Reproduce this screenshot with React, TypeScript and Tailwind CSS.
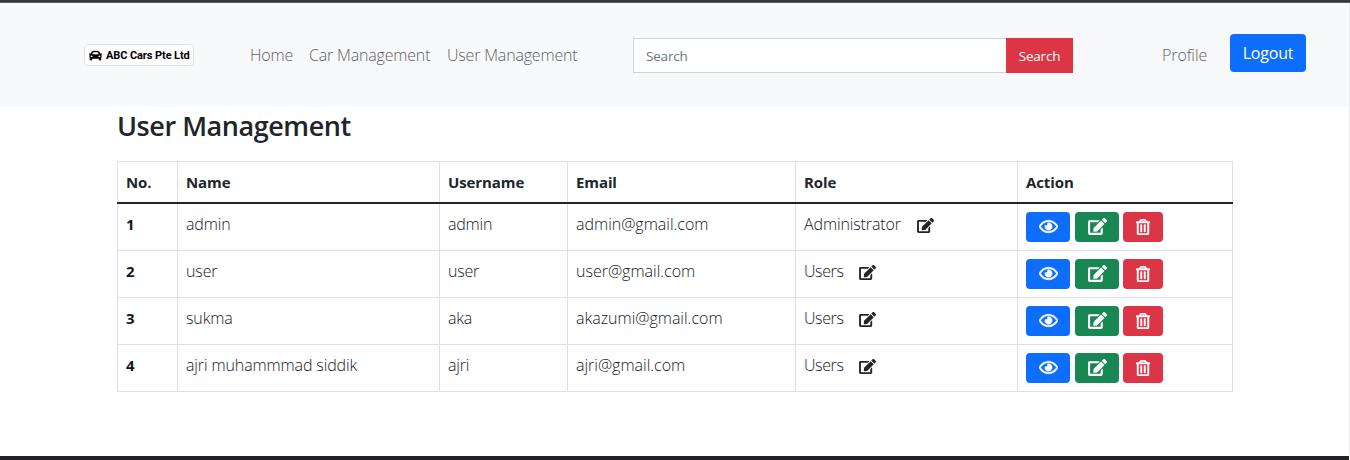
import { FaCar, FaEdit, FaRegEye, FaRegTrashAlt } from 'react-icons/fa';

const users = [
  { name: 'admin', username: 'admin', email: 'admin@gmail.com', role: 'Administrator' },
  { name: 'user', username: 'user', email: 'user@gmail.com', role: 'Users' },
  { name: 'sukma', username: 'aka', email: 'akazumi@gmail.com', role: 'Users' },
  { name: 'ajri muhammmad siddik', username: 'ajri', email: 'ajri@gmail.com', role: 'Users' },
];

const columns = [
  { label: 'No.', width: 'w-[60px]' },
  { label: 'Name', width: 'w-[262px]' },
  { label: 'Username', width: 'w-[128px]' },
  { label: 'Email', width: 'w-[228px]' },
  { label: 'Role', width: 'w-[222px]' },
  { label: 'Action', width: 'w-[215px]' },
];

function Navbar() {
  return (
    <nav className="flex h-[104px] items-start bg-[#f8f9fb] pl-[84px] text-base leading-6 text-[#5f6063]">
      <div className="mt-[41px] flex h-[22px] w-[110px] shrink-0 items-center rounded border border-[#dee2e6] bg-white pl-1 text-black">
        <FaCar className="h-[13px] w-[13px] shrink-0" />
        <span className="ml-[4px] whitespace-nowrap font-['Roboto',sans-serif] text-[11px] font-bold leading-none tracking-[-0.1px]">
          ABC Cars Pte Ltd
        </span>
      </div>
      <div className="ml-14 mt-[40px] flex h-6 w-[383px] shrink-0 whitespace-nowrap font-light tracking-[-0.18px]">
        <a className="w-[59px]">Home</a>
        <a className="w-[138px]">Car Management</a>
        <a>User Management</a>
      </div>
      <form className="mt-[35px] flex h-[35px] w-[440px] shrink-0 text-sm">
        <input
          className="w-[373px] border border-r-0 border-[#ced4da] bg-white px-3 pt-0.5 text-[13.5px] tracking-[-0.2px] placeholder:text-[#6c757d] placeholder:opacity-100"
          placeholder="Search"
        />
        <button type="button" className="w-[67px] bg-[#dc3545] pt-0.5 text-[13.5px] tracking-[-0.2px] text-white">
          Search
        </button>
      </form>
      <a className="ml-[89px] mt-[40px] w-[68px] font-light tracking-[-0.1px]">Profile</a>
      <button type="button" className="mt-[31px] h-[38px] w-[76px] rounded bg-[#0d6efd] text-base tracking-[-0.2px] text-white">
        Logout
      </button>
    </nav>
  );
}

export default function App() {
  return (
    <div className="flex h-[460px] w-full flex-col overflow-hidden bg-white font-['Open_Sans','Noto_Sans',sans-serif] text-[#212529]">
      <div className="h-[3px] shrink-0 border-b border-[#5c5c5e] bg-[#363639]" />
      <div className="h-[453px] border-r border-[#ececee]">
        <Navbar />
        <main className="pl-[117px]">
          <h1 className="h-[54px] pt-0.5 text-[27px] font-semibold leading-[34px] tracking-[-0.45px]">User Management</h1>
          <table className="w-[1116px] table-fixed border-collapse text-left text-base leading-6">
            <thead>
              <tr className="h-[41px] border-b-2 border-[#212529]">
                {columns.map((c) => (
                  <th key={c.label} className={`${c.width} border-x border-t border-[#dee2e6] px-2 text-[15px] font-bold tracking-[-0.1px]`}>
                    {c.label}
                  </th>
                ))}
              </tr>
            </thead>
            <tbody className="font-light text-[#15181b]">
              {users.map((u, i) => (
                <tr key={u.email} className="h-[47px] align-top">
                  <th className="border-x border-b border-[#dee2e6] p-2 text-[15px] font-bold">{i + 1}</th>
                  <td className="border-x border-b border-[#dee2e6] p-2 tracking-[-0.12px]">{u.name}</td>
                  <td className="border-x border-b border-[#dee2e6] p-2 tracking-[-0.2px]">{u.username}</td>
                  <td className="border-x border-b border-[#dee2e6] p-2">{u.email}</td>
                  <td className="border-x border-b border-[#dee2e6] p-2">
                    <div className="flex h-6 items-center">
                      <span className={u.role === 'Users' ? 'w-[55px] tracking-[-0.4px]' : 'w-[113px] tracking-[-0.12px]'}>{u.role}</span>
                      <FaEdit className="mt-1 h-[15px] w-[17px] text-[#212529]" />
                    </div>
                  </td>
                  <td className="border-x border-b border-[#dee2e6] p-2">
                    <div className="flex text-white">
                      <button type="button" className="flex h-[30px] w-11 items-center justify-center rounded bg-[#0d6efd]">
                        <FaRegEye className="h-[17px] w-[19px] stroke-white stroke-[14]" />
                      </button>
                      <button type="button" className="ml-[5px] flex h-[30px] w-11 items-center justify-center rounded bg-[#198754]">
                        <FaEdit className="h-[17px] w-[19px]" />
                      </button>
                      <button type="button" className="ml-1 flex h-[30px] w-10 items-center justify-center rounded bg-[#dc3545]">
                        <FaRegTrashAlt className="h-4 w-3.5 stroke-white stroke-[14]" />
                      </button>
                    </div>
                  </td>
                </tr>
              ))}
            </tbody>
          </table>
        </main>
      </div>
      <div className="mr-px h-1 shrink-0 bg-[#212226]" />
    </div>
  );
}
